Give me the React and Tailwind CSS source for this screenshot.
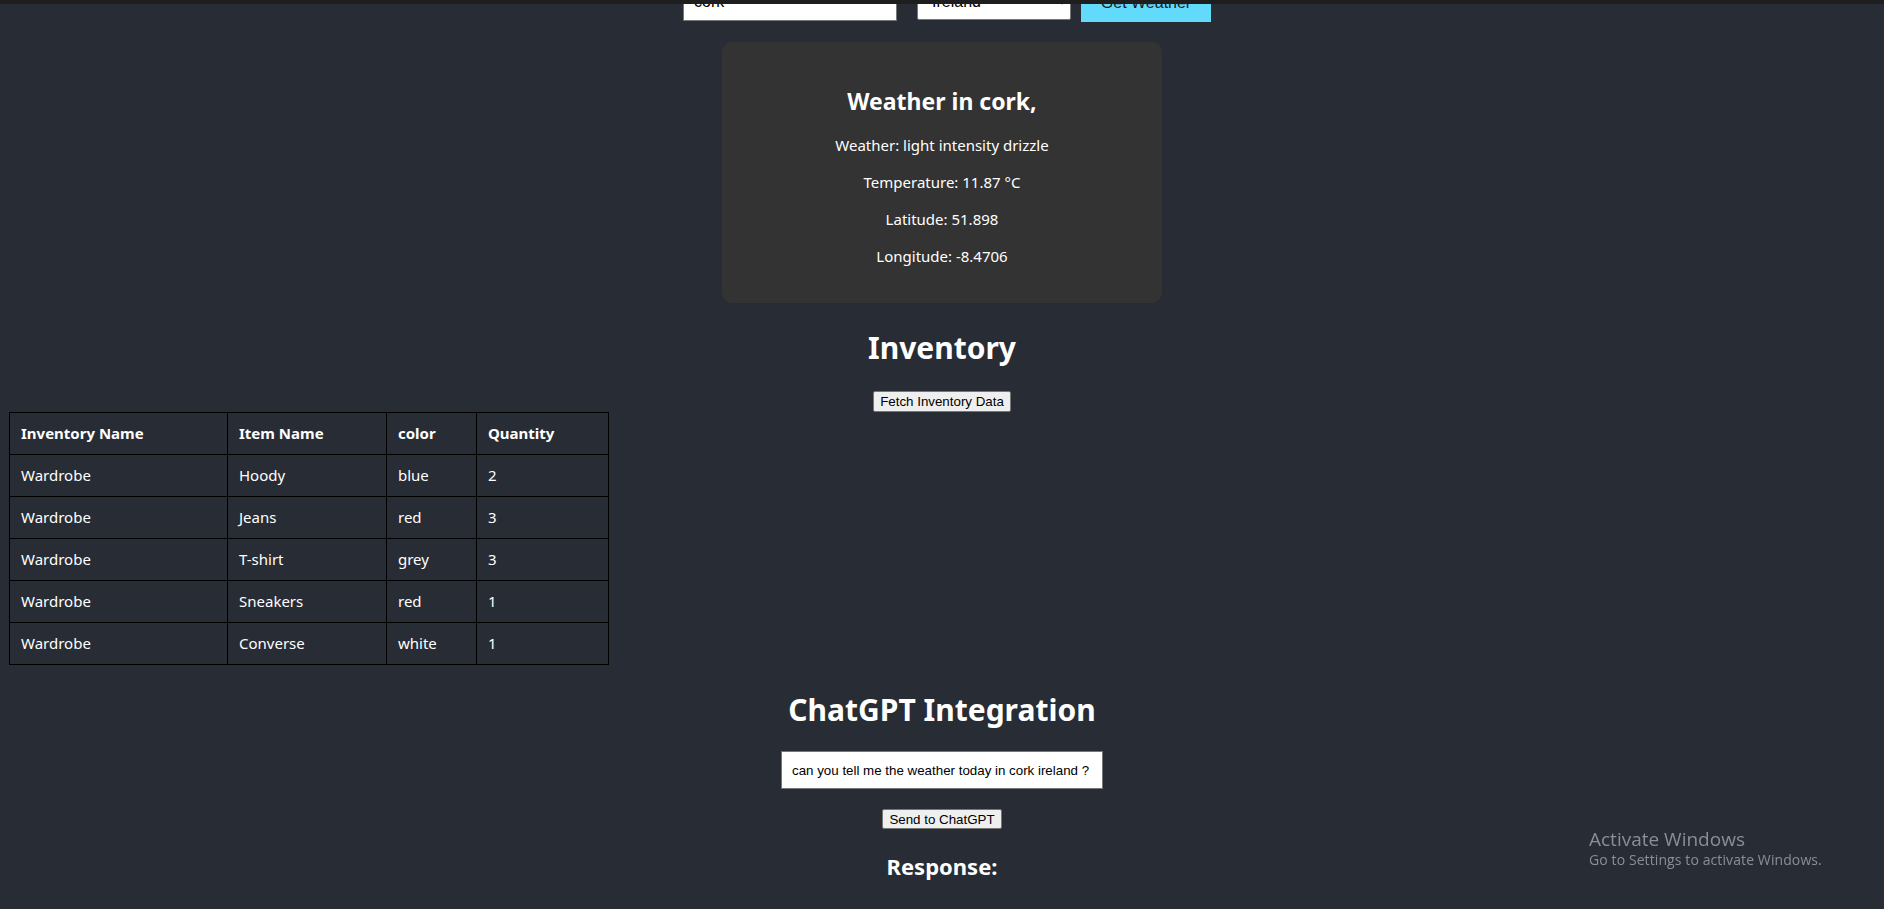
import { useState } from 'react'

const rows = [
  { inv: 'Wardrobe', item: 'Hoody', color: 'blue', qty: 2 },
  { inv: 'Wardrobe', item: 'Jeans', color: 'red', qty: 3 },
  { inv: 'Wardrobe', item: 'T-shirt', color: 'grey', qty: 3 },
  { inv: 'Wardrobe', item: 'Sneakers', color: 'red', qty: 1 },
  { inv: 'Wardrobe', item: 'Converse', color: 'white', qty: 1 },
]

const ui = { fontFamily: '"Noto Sans", "Open Sans", sans-serif' }
const native = { fontFamily: '"Liberation Sans", Arial, sans-serif' }

export default function App() {
  const [city, setCity] = useState('cork')
  const [country, setCountry] = useState('Ireland')
  const [prompt, setPrompt] = useState('can you tell me the weather today in cork ireland ?')

  return (
    <div className="min-h-screen bg-[#282c34] text-white overflow-hidden" style={ui}>
      {/* browser strip */}
      <div className="relative z-10 h-[4px] bg-[#1e1e1e]" />

      {/* search row (page is scrolled, top half hidden) */}
      <div className="-mt-[21px] flex justify-center pl-[10px]">
        <input
          className="w-[214px] h-[38px] px-[10px] bg-white text-black text-[16px] border border-[#767676] mr-[20px]"
          style={native}
          value={city}
          onChange={(e) => setCity(e.target.value)}
        />
        <select
          className="w-[154px] h-[37px] px-[10px] bg-white text-black text-[16px] border border-[#767676] rounded-[2px] mr-[10px]"
          style={native}
          value={country}
          onChange={(e) => setCountry(e.target.value)}
        >
          <option>Ireland</option>
        </select>
        <button
          className="w-[130px] h-[39px] bg-[#61dafb] text-[#1a1a1a] text-[16px]"
          style={native}
        >
          Get Weather
        </button>
      </div>

      {/* weather card */}
      <div className="mt-[20px] mx-auto w-[440px] bg-[#333333] rounded-[10px] pt-[43px] pb-[36px] text-center">
        <h2 className="text-[23px] leading-[32px] font-bold">Weather in cork,</h2>
        <p className="mt-[18px] text-[15px] leading-[21px]">Weather: light intensity drizzle</p>
        <p className="mt-[16px] text-[15px] leading-[21px]">Temperature: 11.87 °C</p>
        <p className="mt-[16px] text-[15px] leading-[21px]">Latitude: 51.898</p>
        <p className="mt-[16px] text-[15px] leading-[21px]">Longitude: -8.4706</p>
      </div>

      {/* inventory */}
      <h1 className="mt-[24px] text-center text-[30px] leading-[42px] font-bold">Inventory</h1>
      <div className="mt-[22px] flex justify-center">
        <button
          className="h-[21px] px-[6px] bg-[#efefef] text-black text-[13.33px] border border-[#767676] rounded-[2px]"
          style={native}
        >
          Fetch Inventory Data
        </button>
      </div>

      <table className="ml-[9px] w-[599px] table-fixed border-collapse text-[15px] leading-[21px]">
        <thead>
          <tr>
            <th className="w-[218px] border border-black px-[11px] py-[10px] text-left font-bold">Inventory Name</th>
            <th className="w-[159px] border border-black px-[11px] py-[10px] text-left font-bold">Item Name</th>
            <th className="w-[90px] border border-black px-[11px] py-[10px] text-left font-bold">color</th>
            <th className="w-[132px] border border-black px-[11px] py-[10px] text-left font-bold">Quantity</th>
          </tr>
        </thead>
        <tbody>
          {rows.map((r, i) => (
            <tr key={i}>
              <td className="border border-black px-[11px] py-[10px]">{r.inv}</td>
              <td className="border border-black px-[11px] py-[10px]">{r.item}</td>
              <td className="border border-black px-[11px] py-[10px]">{r.color}</td>
              <td className="border border-black px-[11px] py-[10px]">{r.qty}</td>
            </tr>
          ))}
        </tbody>
      </table>

      {/* chatgpt */}
      <h1 className="mt-[24px] text-center text-[30px] leading-[42px] font-bold">ChatGPT Integration</h1>
      <div className="mt-[20px] flex justify-center">
        <input
          className="w-[322px] h-[38px] px-[10px] bg-white text-black text-[13.33px] border border-[#767676]"
          style={native}
          value={prompt}
          onChange={(e) => setPrompt(e.target.value)}
        />
      </div>
      <div className="mt-[20px] flex justify-center">
        <button
          className="h-[20px] px-[6px] bg-[#efefef] text-black text-[13.33px] border border-[#767676] rounded-[2px]"
          style={native}
        >
          Send to ChatGPT
        </button>
      </div>
      <h2 className="mt-[21px] text-center text-[22px] leading-[32px] font-bold">Response:</h2>

      {/* windows watermark */}
      <div className="fixed left-[1589px] top-[827px] text-[#8b8e94]" style={{ fontFamily: '"Open Sans", "Noto Sans", sans-serif' }}>
        <div className="text-[19px] leading-[24px]">Activate Windows</div>
        <div className="text-[14px] leading-[18px] tracking-[0.1px]">Go to Settings to activate Windows.</div>
      </div>
    </div>
  )
}
